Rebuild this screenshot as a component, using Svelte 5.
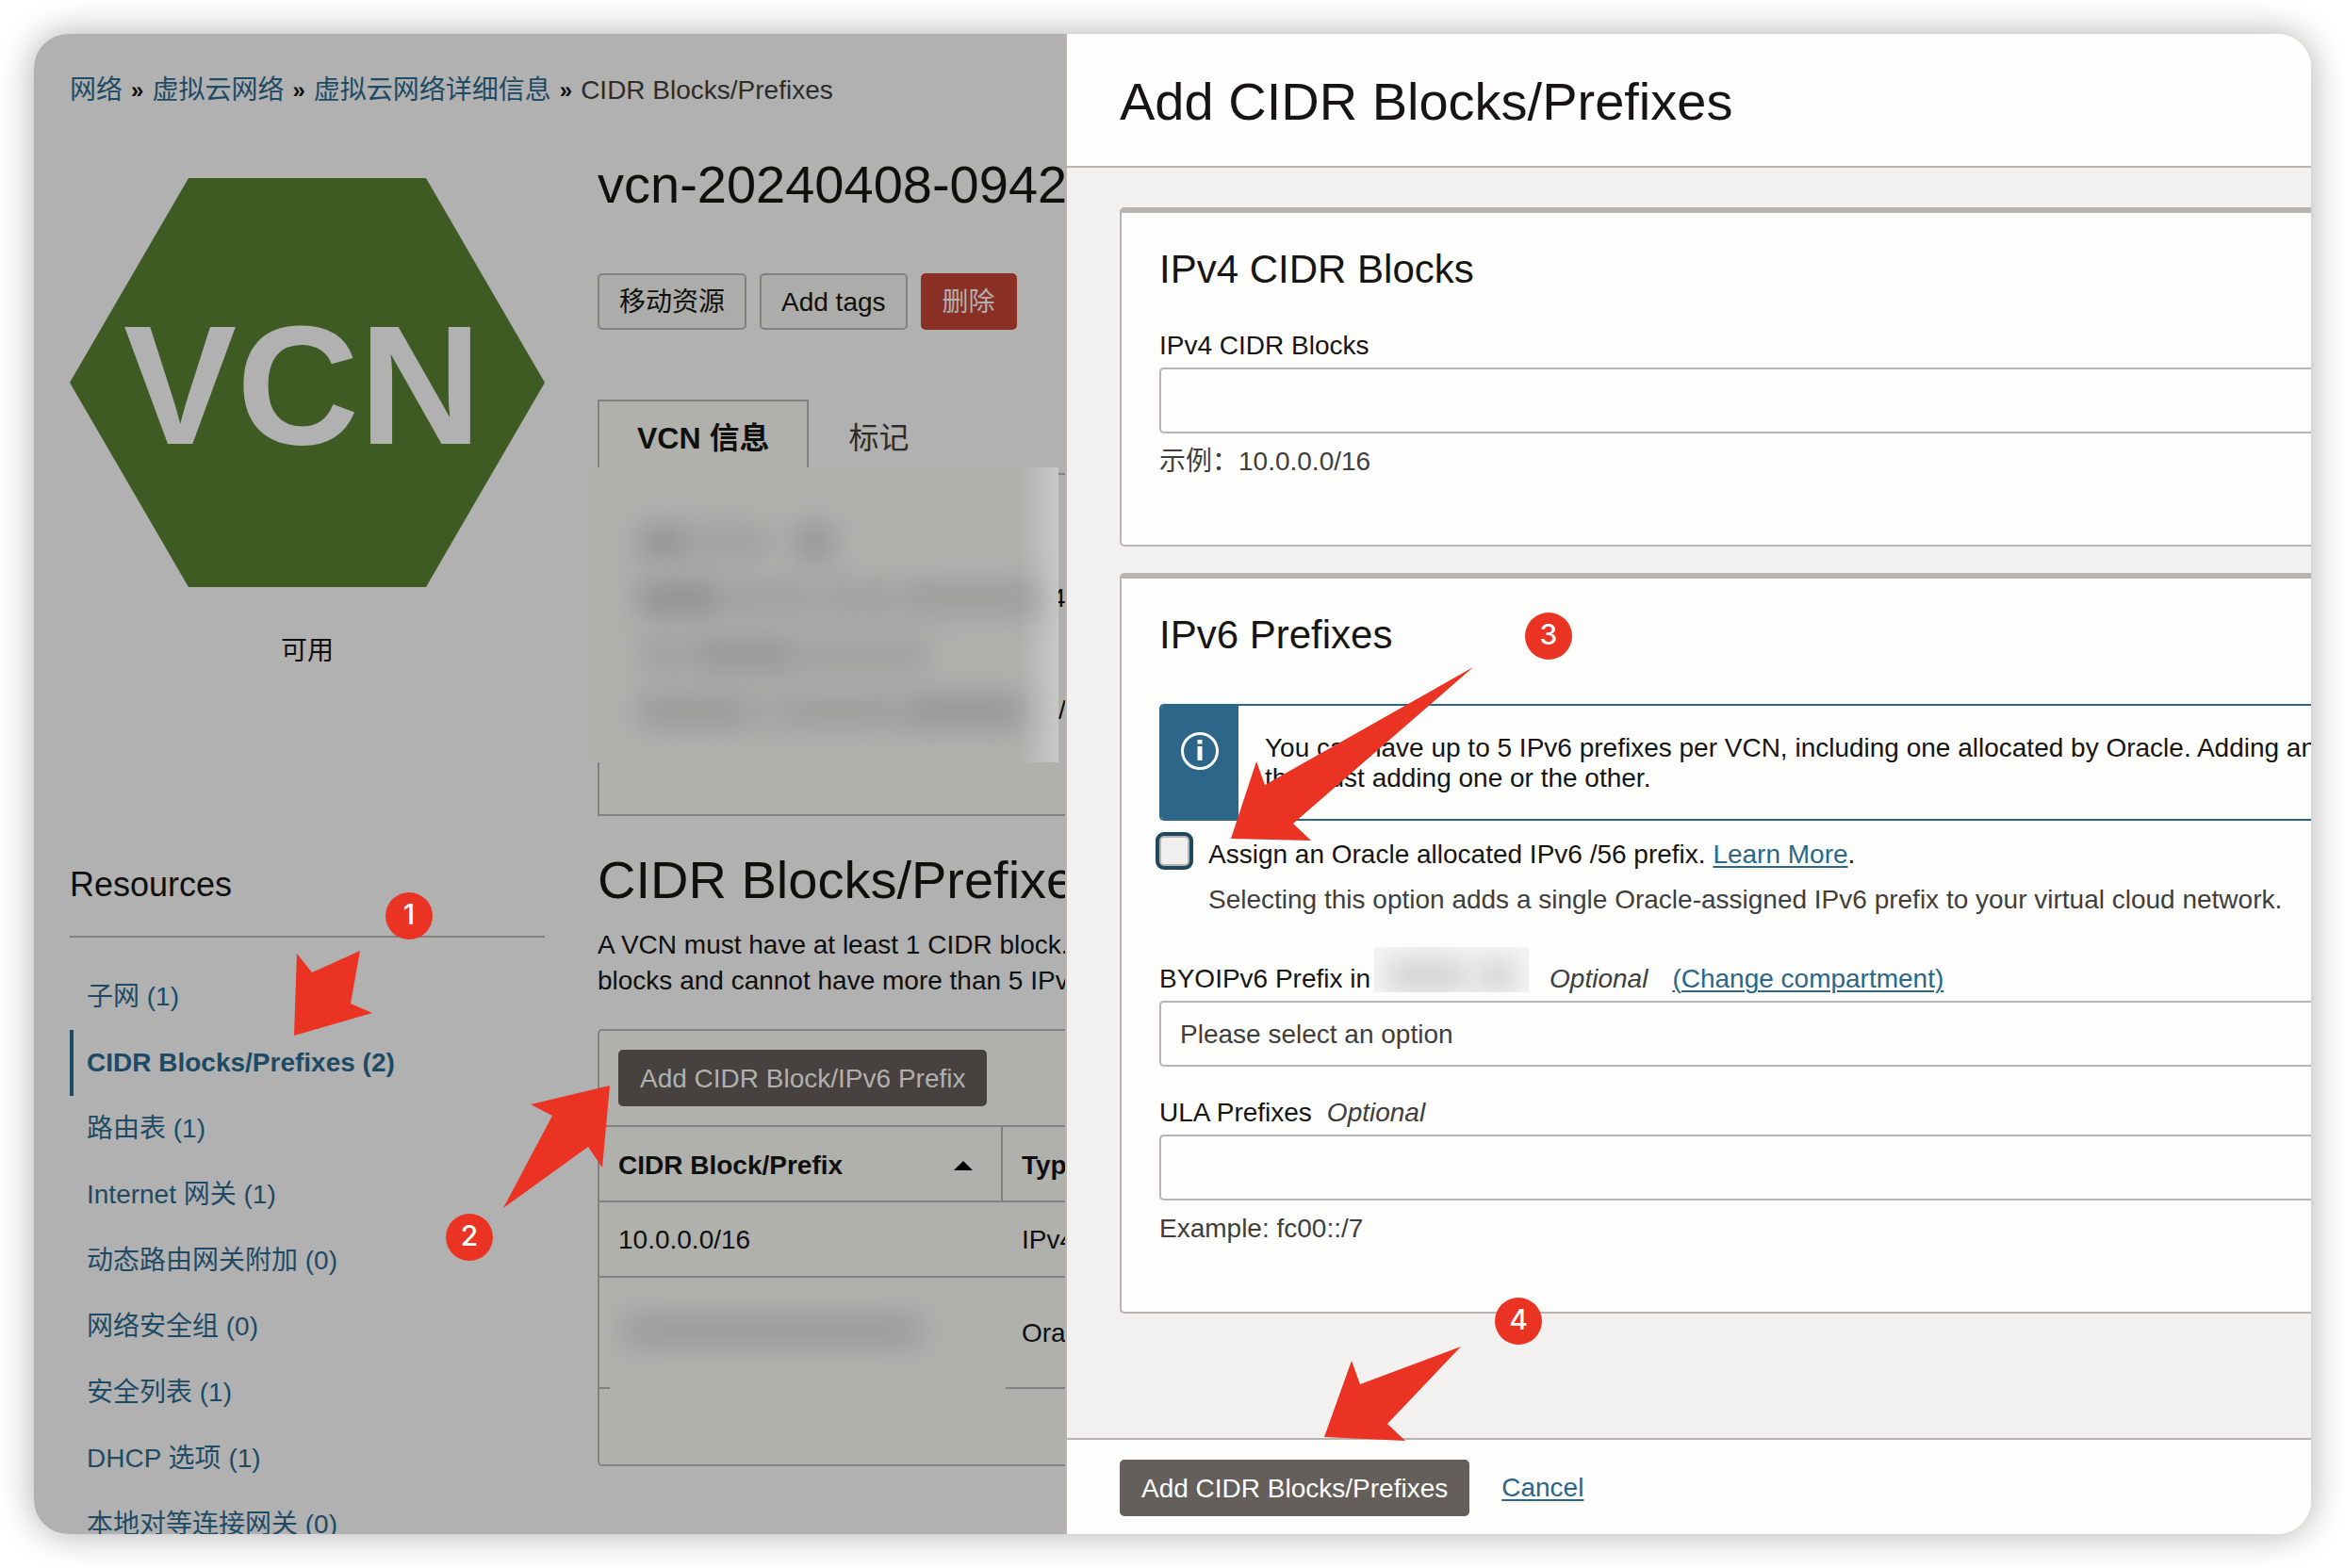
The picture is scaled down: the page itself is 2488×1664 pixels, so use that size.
<script lang="ts">
	interface Resource {
		label: string;
		count: number;
		active?: boolean;
	}

	const crumbs = ['网络', '虚拟云网络', '虚拟云网络详细信息'];

	const resources: Resource[] = [
		{ label: '子网', count: 1 },
		{ label: 'CIDR Blocks/Prefixes', count: 2, active: true },
		{ label: '路由表', count: 1 },
		{ label: 'Internet 网关', count: 1 },
		{ label: '动态路由网关附加', count: 0 },
		{ label: '网络安全组', count: 0 },
		{ label: '安全列表', count: 1 },
		{ label: 'DHCP 选项', count: 1 },
		{ label: '本地对等连接网关', count: 0 }
	];

	// redacted rows: width and strength of each smudge
	const smudges = [
		[[56, 0.9], [86, 0.5], [24, 0], [44, 0.9]],
		[[90, 1], [100, 0.5], [90, 0.5], [150, 0.6]],
		[[60, 0.5], [110, 0.8], [140, 0.5]],
		[[120, 0.7], [30, 0.4], [130, 0.6], [130, 0.8]]
	];

	const steps = [
		{ n: 1, x: 434, y: 972, arrow: '315,1012 331,1032 382,1009 372,1065 395,1075 312,1099' },
		{ n: 2, x: 498, y: 1313, arrow: '534,1282 586,1184 563,1172 647,1152 639,1239 624,1217' },
		{ n: 3, x: 1643, y: 675, arrow: '1563,708 1342,833 1333,808 1306,890 1391,892 1372,874' },
		{ n: 4, x: 1611, y: 1402, arrow: '1550,1429 1443,1469 1434,1444 1405,1525 1491,1529 1472,1511' }
	];

	let ipv4 = $state('');
	let ula = $state('');
	let assignOracle = $state(false);
	let byoip = $state('');
</script>

<div class="stage">
	<div class="window">
		<div class="page">
			<nav class="crumbs">
				{#each crumbs as crumb}
					<a href="#top">{crumb}</a><span class="sep">»</span>
				{/each}
				<span class="here">CIDR Blocks/Prefixes</span>
			</nav>

			<div class="columns">
				<aside>
					<svg class="hex" viewBox="0 0 504 434" role="img" aria-label="VCN">
						<polygon points="0,217 126,0 378,0 504,217 378,434 126,434" />
						<text x="247" y="282" text-anchor="middle">VCN</text>
					</svg>
					<p class="status">可用</p>
					<h3>Resources</h3>
					<ul>
						{#each resources as r}
							<li class:active={r.active}>
								<a href="#top">{r.label} ({r.count})</a>
							</li>
						{/each}
					</ul>
				</aside>

				<main>
					<h1>vcn-20240408-0942</h1>
					<div class="actions">
						<button class="btn">移动资源</button>
						<button class="btn">Add tags</button>
						<button class="btn danger">删除</button>
					</div>

					<div class="tabs">
						<button class="tab selected">VCN 信息</button>
						<button class="tab">标记</button>
					</div>
					<div class="info-panel">
						<p class="tail">4</p>
						<p class="tail slash">/</p>
						<div class="mask">
							{#each smudges as row}
								<div class="smudge-row">
									{#each row as [w, strength]}
										<span class="smudge" style="width: {w}px; opacity: {strength}"></span>
									{/each}
								</div>
							{/each}
						</div>
					</div>

					<h1 class="section-title">CIDR Blocks/Prefixes</h1>
					<p class="intro">
						A VCN must have at least 1 CIDR block.<br />
						blocks and cannot have more than 5 IPv6
					</p>

					<div class="table-box">
						<div class="toolbar">
							<button class="btn dark">Add CIDR Block/IPv6 Prefix</button>
						</div>
						<table>
							<thead>
								<tr>
									<th class="prefix">
										<span class="sortable">
											CIDR Block/Prefix
											<svg width="20" height="10" viewBox="0 0 20 10"><path d="M0 10 10 0l10 10z" /></svg>
										</span>
									</th>
									<th>Type</th>
								</tr>
							</thead>
							<tbody>
								<tr>
									<td>10.0.0.0/16</td>
									<td>IPv4</td>
								</tr>
								<tr class="tall">
									<td><div class="mask small"><span class="smudge"></span></div></td>
									<td>Oracle</td>
								</tr>
							</tbody>
						</table>
						<div class="table-foot"></div>
					</div>
				</main>
			</div>
		</div>

		<section class="drawer">
			<header>
				<h2>Add CIDR Blocks/Prefixes</h2>
			</header>

			<div class="drawer-body">
				<div class="card">
					<h4>IPv4 CIDR Blocks</h4>
					<label class="field-label" for="ipv4">IPv4 CIDR Blocks</label>
					<input id="ipv4" class="field" type="text" bind:value={ipv4} />
					<p class="hint">示例：10.0.0.0/16</p>
				</div>

				<div class="card">
					<h4>IPv6 Prefixes</h4>
					<div class="notice">
						<div class="notice-icon">
							<svg width="40" height="40" viewBox="0 0 40 40">
								<circle cx="20" cy="20" r="18.5" />
								<path d="M17.5 8h5v4.5h-5zM17.5 15h5v15h-5z" />
							</svg>
						</div>
						<p>
							You can have up to 5 IPv6 prefixes per VCN, including one allocated by Oracle. Adding an<br />
							than just adding one or the other.
						</p>
					</div>

					<div class="check">
						<input id="assign" type="checkbox" bind:checked={assignOracle} />
						<div class="check-text">
							<label for="assign">Assign an Oracle allocated IPv6 /56 prefix.</label>
							<a href="#top">Learn More</a>.
							<p>Selecting this option adds a single Oracle-assigned IPv6 prefix to your virtual cloud network.</p>
						</div>
					</div>

					<div class="label-row">
						<label for="byoip">BYOIPv6 Prefix in</label>
						<span class="compartment"><span class="smudge"></span><span class="smudge"></span></span>
						<em>Optional</em>
						<a href="#top">(Change compartment)</a>
					</div>
					<select id="byoip" class="field" bind:value={byoip}>
						<option value="">Please select an option</option>
					</select>

					<div class="label-row ula">
						<label for="ula">ULA Prefixes</label>
						<em>Optional</em>
					</div>
					<input id="ula" class="field" type="text" bind:value={ula} />
					<p class="hint">Example: fc00::/7</p>
				</div>
			</div>

			<footer>
				<button class="btn primary">Add CIDR Blocks/Prefixes</button>
				<a href="#top">Cancel</a>
			</footer>
		</section>
	</div>

	<svg class="annotations">
		{#each steps as s}
			<polygon points={s.arrow} />
			<circle cx={s.x} cy={s.y} r="25" />
			<text x={s.x} y={s.y + 9} text-anchor="middle">{s.n}</text>
		{/each}
	</svg>
</div>

<style>
	:global(body) {
		background: #fff;
	}

	.stage,
	.stage :global(*) {
		box-sizing: border-box;
	}

	.stage {
		position: relative;
		height: 100vh;
		padding: 36px;
		font-family: 'Liberation Sans', 'Noto Sans CJK SC', sans-serif;
		font-size: 28px;
		line-height: 36px;
		color: #161513;
	}

	.window {
		display: grid;
		grid-template-columns: 1094px minmax(0, 1fr);
		height: 100%;
		border-radius: 36px;
		overflow: hidden;
		box-shadow: 0 0 38px rgba(0, 0, 0, 0.32);
	}

	h1,
	h2,
	h3,
	h4,
	p,
	ul {
		margin: 0;
		padding: 0;
		font-weight: 400;
	}

	button,
	input,
	select {
		font: inherit;
		color: inherit;
		margin: 0;
	}

	a {
		color: #2c6688;
		text-underline-offset: 3px;
		text-decoration-thickness: 2px;
	}

	/* dimmed page */
	.page {
		background: #b1b1b1;
		color: #0f0f0d;
		padding: 40px 0 0 38px;
		overflow: hidden;
		min-height: 0;
		white-space: nowrap;
	}

	.page a {
		color: #1e4a65;
		text-decoration: none;
	}

	.crumbs {
		display: flex;
		gap: 9px;
		line-height: 40px;
	}

	.sep {
		font-size: 24px;
		font-weight: 700;
	}

	.here {
		color: #2c2c2b;
	}

	.columns {
		display: grid;
		grid-template-columns: 504px minmax(0, 1fr);
		gap: 56px;
		margin-top: 48px;
	}

	aside {
		padding-top: 25px;
	}

	.hex {
		display: block;
		width: 100%;
	}

	.hex polygon {
		fill: #3f5b24;
	}

	.hex text {
		fill: #b1b1b1;
		font-size: 180px;
		font-weight: 700;
	}

	.status {
		margin-top: 50px;
		text-align: center;
	}

	h3 {
		margin-top: 206px;
		padding-bottom: 30px;
		border-bottom: 2px solid #838080;
		font-size: 36px;
		line-height: 48px;
	}

	ul {
		list-style: none;
		margin-top: 28px;
	}

	li {
		border-left: 4px solid transparent;
		padding-left: 14px;
		line-height: 70px;
	}

	li.active {
		border-color: #1e4a65;
		font-weight: 700;
	}

	h1 {
		font-size: 56px;
		line-height: 64px;
	}

	.actions {
		display: flex;
		gap: 14px;
		margin-top: 62px;
	}

	.btn {
		height: 60px;
		padding: 2px 21px 0;
		border: 2px solid #838080;
		border-radius: 5px;
		background: #acacaa;
		white-space: nowrap;
	}

	.danger {
		background: #8a3024;
		border-color: #8a3024;
		color: #b1b1b1;
	}

	.dark {
		background: #47413f;
		border-color: #47413f;
		color: #b1b1ae;
	}

	.primary {
		background: #645f5a;
		border-color: #645f5a;
		color: #fff;
	}

	.tabs {
		display: flex;
		height: 80px;
		margin-top: 74px;
	}

	.tab {
		position: relative;
		padding: 0 40px;
		border: 2px solid transparent;
		border-bottom: 0;
		background: none;
		color: #2c2c2b;
		font-size: 32px;
	}

	.tab.selected {
		z-index: 1;
		border-color: #838080;
		background: #b0b0ad;
		color: #0f0f0d;
		font-weight: 700;
	}

	.info-panel {
		position: relative;
		height: 364px;
		margin-top: -2px;
		padding-top: 113px;
		border: 2px solid #838080;
		border-right: 0;
		background: #b0b0ad;
	}

	.tail {
		padding-left: 479px;
		margin-bottom: 83px;
	}

	.tail.slash {
		padding-left: 487px;
		margin-bottom: 0;
	}

	.mask {
		position: absolute;
		z-index: 2;
		top: -8px;
		left: -14px;
		width: 501px;
		height: 313px;
		padding: 49px 0 0 54px;
		overflow: hidden;
		background: linear-gradient(to right, transparent 460px, #c8c8c6) #b0b0ad;
	}

	.smudge-row {
		display: flex;
		height: 60px;
		align-items: center;
	}

	.smudge {
		height: 36px;
		border-radius: 12px;
		background: #90908e;
		filter: blur(15px);
	}

	.mask.small {
		z-index: 0;
		top: 2px;
		left: 11px;
		width: 420px;
		height: 140px;
		padding: 38px 12px;
		background: #b0b0ad;
	}

	.mask.small .smudge {
		display: block;
		width: 320px;
		height: 32px;
		background: #999997;
	}

	.section-title {
		margin-top: 36px;
	}

	.intro {
		margin-top: 18px;
		line-height: 38px;
	}

	.table-box {
		margin-top: 32px;
		border: 2px solid #838080;
		border-right: 0;
		border-radius: 5px 0 0 5px;
		background: #b0b0ad;
	}

	.toolbar {
		padding: 20px;
	}

	table {
		width: 100%;
		table-layout: fixed;
		border-spacing: 0;
	}

	th,
	td {
		position: relative;
		height: 80px;
		padding: 2px 0 0 20px;
		border-top: 2px solid #838080;
		text-align: left;
	}

	th {
		padding-top: 4px;
	}

	.tall td {
		height: 118px;
	}

	.prefix {
		width: 428px;
		padding-right: 30px;
		border-right: 2px solid #838080;
	}

	.sortable {
		display: flex;
		align-items: center;
		justify-content: space-between;
	}

	.table-foot {
		height: 82px;
		border-top: 2px solid #838080;
	}

	/* drawer */
	.drawer {
		display: flex;
		flex-direction: column;
		min-height: 0;
		border-left: 2px solid #bab4b0;
		background: #f3f1f0;
		white-space: nowrap;
		overflow: hidden;
	}

	header {
		padding: 40px 56px 36px;
		border-bottom: 2px solid #bab4b0;
		background: #fdfdfb;
	}

	h2 {
		font-size: 56px;
		line-height: 64px;
	}

	.drawer-body {
		display: flex;
		flex: 1;
		flex-direction: column;
		gap: 28px;
		min-height: 0;
		padding: 42px 0 0 56px;
	}

	.card {
		padding: 36px 0 70px 40px;
		border: 2px solid #bab4b0;
		border-top-width: 6px;
		border-right: 0;
		border-radius: 5px 0 0 5px;
		background: #fdfdfb;
	}

	h4 {
		margin-bottom: 39px;
		font-size: 42px;
		line-height: 48px;
	}

	.field-label {
		display: block;
	}

	.field {
		display: block;
		width: 100%;
		height: 70px;
		margin-top: 5px;
		padding: 2px 20px 0;
		appearance: none;
		border: 2px solid #bab4b0;
		border-right: 0;
		border-radius: 5px 0 0 5px;
		background: #fdfdfb;
		color: #403e3c;
		outline: none;
	}

	.hint {
		margin-top: 12px;
		color: #403e3c;
	}

	.notice {
		display: flex;
		margin-top: 49px;
		height: 124px;
		border: 2px solid #2c6688;
		border-right: 0;
		border-radius: 5px 0 0 5px;
		overflow: hidden;
	}

	.notice-icon {
		flex: none;
		width: 82px;
		padding: 28px 21px;
		background: #2c6688;
	}

	.notice-icon circle {
		fill: none;
		stroke: #fff;
		stroke-width: 3;
	}

	.notice-icon path {
		fill: #fff;
	}

	.notice p {
		padding: 29px 0 0 28px;
		line-height: 32px;
	}

	.check {
		display: flex;
		gap: 20px;
		margin-top: 16px;
	}

	.check input {
		flex: none;
		width: 32px;
		height: 32px;
		appearance: none;
		border: 2px solid #bab4b0;
		border-radius: 5px;
		background: #f0efee;
		box-shadow: 0 0 0 4px #1e4760;
	}

	.check-text {
		padding-top: 2px;
	}

	.check p {
		margin-top: 12px;
		color: #403e3c;
	}

	.label-row {
		display: flex;
		margin-top: 48px;
	}

	.label-row.ula {
		gap: 16px;
		margin-top: 31px;
	}

	.label-row em {
		color: #403e3c;
	}

	.label-row a {
		margin-left: 26px;
	}

	.compartment {
		display: flex;
		gap: 10px;
		width: 164px;
		height: 48px;
		margin: -16px 22px 0 4px;
		padding: 14px 12px;
		overflow: hidden;
		background: #f6f6f5;
	}

	.compartment .smudge {
		flex: 1;
		height: 32px;
		background: #cccccb;
	}

	.compartment .smudge:first-child {
		flex: 2;
	}

	footer {
		display: flex;
		align-items: center;
		gap: 34px;
		height: 102px;
		padding: 2px 56px 0;
		border-top: 2px solid #bab4b0;
		background: #fdfdfb;
	}

	/* numbered arrows drawn over the console */
	.annotations {
		position: absolute;
		inset: 0;
		z-index: 5;
		width: 100%;
		height: 100%;
		pointer-events: none;
		fill: #eb3323;
	}

	.annotations text {
		fill: #fff;
		font-family: Inter, sans-serif;
		font-size: 30px;
		font-weight: 500;
	}
</style>
